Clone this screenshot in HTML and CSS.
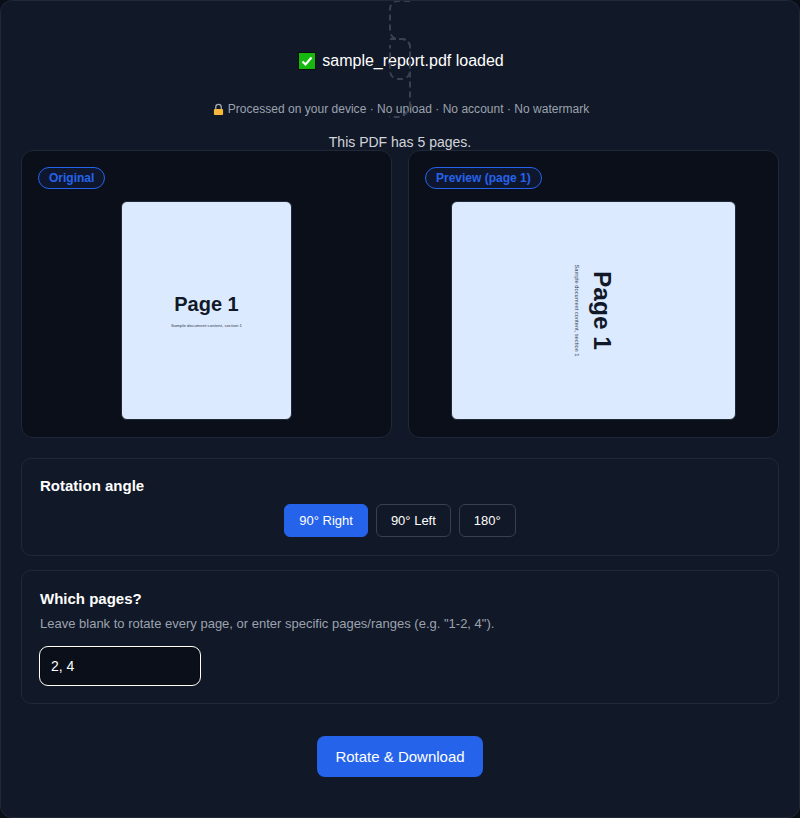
FILE: index.html
```html
<!DOCTYPE html>
<html lang="en">
<head>
    <meta charset="UTF-8">
    <meta name="viewport" content="width=device-width, initial-scale=1.0">
    <title>Rotate PDF</title>
    <link rel="stylesheet" href="styles.css">
</head>
<body>
    <main class="tool">
        <svg class="dash-art" viewBox="0 0 40 125" aria-hidden="true">
            <path class="dash-line" d="M30 1H18a8 8 0 0 0-8 8V31a8 8 0 0 0 8 8H22a8 8 0 0 1 8 8V104a13 13 0 0 1-13 13H9" />
            <path class="dash-line" d="M10 39H22a8 8 0 0 1 8 8V71a8 8 0 0 1-8 8H18a8 8 0 0 1-8-8V45" />
        </svg>

        <div class="file-line">
            <svg class="check-icon" viewBox="0 0 18 18" aria-hidden="true">
                <rect x="0" y="0" width="18" height="18" fill="#0b0f0b" />
                <rect x="1" y="1" width="16" height="16" fill="#16b80f" />
                <path d="M4.5 9.5l3 3 6-7" fill="none" stroke="#fff" stroke-width="2.2" />
            </svg>
            <span>sample_report.pdf loaded</span>
        </div>

        <p class="privacy">
            <svg class="lock-icon" viewBox="0 0 12 13" aria-hidden="true">
                <path d="M3 6V4a3 3 0 0 1 6 0v2" fill="none" stroke="#a9adb3" stroke-width="1.4" />
                <rect x="1" y="6" width="10" height="6.5" rx="1" fill="#f6b73c" />
            </svg>
            <span>Processed on your device · No upload · No account · No watermark</span>
        </p>

        <p class="page-count">This PDF has 5 pages.</p>

        <div class="previews">
            <section class="preview">
                <span class="tag">Original</span>
                <div class="stage">
                    <div class="sheet sheet-portrait">
                        <div class="sheet-title">Page 1</div>
                        <div class="sheet-text">Sample document content, section 1</div>
                    </div>
                </div>
            </section>
            <section class="preview">
                <span class="tag">Preview (page 1)</span>
                <div class="stage">
                    <div class="sheet sheet-landscape">
                        <div class="sheet-turned">
                            <div class="sheet-title big">Page 1</div>
                            <div class="sheet-text big">Sample document content, section 1</div>
                        </div>
                    </div>
                </div>
            </section>
        </div>

        <section class="panel panel-angle">
            <h2>Rotation angle</h2>
            <div class="angles">
                <button class="angle active">90° Right</button>
                <button class="angle">90° Left</button>
                <button class="angle">180°</button>
            </div>
        </section>

        <section class="panel panel-pages">
            <h2>Which pages?</h2>
            <p class="hint">Leave blank to rotate every page, or enter specific pages/ranges (e.g. "1-2, 4").</p>
            <input class="pages-input" type="text" value="2, 4">
        </section>

        <div class="actions">
            <button class="download">Rotate &amp; Download</button>
        </div>
    </main>
</body>
</html>
```

FILE: styles.css
```css
* {
    box-sizing: border-box;
}

html, body {
    height: 100%;
}

body {
    margin: 0;
    background-color: #0a0e17;
    font-family: "Liberation Sans", Arial, sans-serif;
    color: #fff;
}

.tool {
    position: relative;
    height: 818px;
    padding: 0 20px;
    background-color: #111827;
    border: 1px solid #1f2937;
    border-radius: 12px;
    overflow: hidden;
}

.dash-art {
    position: absolute;
    left: 379px;
    top: -1px;
    width: 40px;
    height: 125px;
}

.dash-line {
    fill: none;
    stroke: #374151;
    stroke-width: 2;
    stroke-dasharray: 6 4;
}

.file-line {
    display: flex;
    justify-content: center;
    align-items: center;
    gap: 6px;
    padding: 50px 0 0 2px;
    height: 70px;
    font-size: 16px;
}

.check-icon {
    width: 18px;
    height: 18px;
}

.privacy {
    display: flex;
    justify-content: center;
    align-items: center;
    gap: 4px;
    margin: 30px 0 0;
    padding-left: 2px;
    font-size: 12px;
    line-height: 16px;
    letter-spacing: 0.02px;
    color: #9ca3af;
}

.lock-icon {
    width: 11px;
    height: 13px;
}

.page-count {
    margin: 17px 0 0;
    text-align: center;
    font-size: 14px;
    line-height: 16px;
    color: #d1d5db;
}

.previews {
    display: grid;
    grid-template-columns: 1fr 1fr;
    gap: 16px;
}

.preview {
    height: 288px;
    padding: 16px;
    background-color: #0b0f19;
    border: 1px solid #1f2937;
    border-radius: 12px;
}

.tag {
    display: inline-block;
    height: 22px;
    padding: 0 10px;
    font-size: 12px;
    font-weight: bold;
    line-height: 20px;
    color: #2563eb;
    background-color: #0f172e;
    border: 1px solid #2563eb;
    border-radius: 11px;
}

.stage {
    display: flex;
    justify-content: center;
    margin-top: 12px;
}

.sheet {
    display: flex;
    justify-content: center;
    align-items: center;
    height: 219px;
    background-color: #dbeafe;
    border: 1px solid #1f2937;
    border-radius: 6px;
    color: #111827;
}

.sheet-portrait {
    flex-direction: column;
    width: 171px;
}

.sheet-landscape {
    width: 285px;
}

.sheet-turned {
    flex-shrink: 0;
    width: 200px;
    text-align: center;
    transform: rotate(90deg);
}

.sheet-title {
    font-size: 20px;
    font-weight: bold;
    line-height: 24px;
}

.sheet-title.big {
    font-size: 24.5px;
    line-height: 28px;
}

.sheet-text {
    margin-top: 6px;
    font-size: 4.4px;
    line-height: 8px;
    color: #374151;
}

.sheet-text.big {
    margin-top: 7px;
    font-size: 5.7px;
}

.panel {
    padding: 18px;
    border: 1px solid #1f2937;
    border-radius: 10px;
}

.panel-angle {
    height: 98px;
    margin-top: 20px;
}

.panel h2 {
    margin: 0;
    font-size: 15px;
    line-height: 18px;
    font-weight: bold;
}

.angles {
    display: flex;
    justify-content: center;
    gap: 8px;
    margin-top: 9px;
}

.angle {
    height: 33px;
    padding: 0 14px;
    font-family: inherit;
    font-size: 13px;
    color: #fff;
    background: transparent;
    border: 1px solid #374151;
    border-radius: 6px;
}

.angle.active {
    background-color: #2563eb;
    border-color: #2563eb;
}

.panel-pages {
    height: 134px;
    margin-top: 14px;
    padding-top: 19px;
}

.hint {
    margin: 8px 0 0;
    font-size: 13px;
    line-height: 16px;
    color: #9ca3af;
}

.pages-input {
    display: block;
    width: 160px;
    height: 38px;
    margin-top: 15px;
    padding: 0 10px;
    font-family: inherit;
    font-size: 14px;
    color: #fff;
    background-color: #0b0f19;
    border: 1px solid #0b0b0b;
    border-radius: 8px;
    outline: 1px solid #fff;
}

.actions {
    display: flex;
    justify-content: center;
    margin-top: 32px;
}

.download {
    width: 166px;
    height: 41px;
    font-family: inherit;
    font-size: 15px;
    color: #fff;
    background-color: #2563eb;
    border: none;
    border-radius: 8px;
}
```
